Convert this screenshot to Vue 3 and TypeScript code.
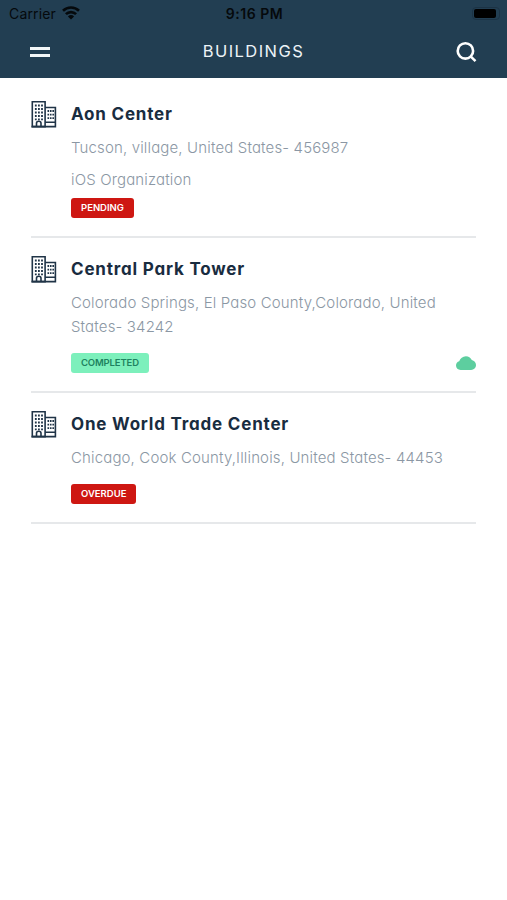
<script setup lang="ts">
type Status = 'pending' | 'completed' | 'overdue'

interface Building {
  id: number
  name: string
  address: string[]
  organization?: string
  status: Status
  synced?: boolean
}

const buildings: Building[] = [
  {
    id: 1,
    name: 'Aon Center',
    address: ['Tucson, village, United States- 456987'],
    organization: 'iOS Organization',
    status: 'pending',
  },
  {
    id: 2,
    name: 'Central Park Tower',
    address: ['Colorado Springs, El Paso County,Colorado, United', 'States- 34242'],
    status: 'completed',
    synced: true,
  },
  {
    id: 3,
    name: 'One World Trade Center',
    address: ['Chicago, Cook County,Illinois, United States- 44453'],
    status: 'overdue',
  },
]
</script>

<template>
  <div class="screen">
    <header class="header">
      <div class="status-bar">
        <div class="carrier">
          <span>Carrier</span>
          <svg class="wifi" viewBox="0 0 18 14" width="18" height="14">
            <g fill="none" stroke="#05090c" stroke-width="2.6">
              <path d="M1 4.8a11.4 11.4 0 0 1 16 0" />
              <path d="M3.9 8.200a7.200 7.200 0 0 1 10.200 0" />
            </g>
            <path d="M9 13.600 5.900 10.400a4.500 4.500 0 0 1 6.200 0z" fill="#05090c" />
          </svg>
        </div>
        <span class="time">9:16 PM</span>
        <div class="battery"><i></i></div>
      </div>
      <nav class="nav">
        <button class="menu" aria-label="Menu"><i></i><i></i></button>
        <h1>BUILDINGS</h1>
        <button class="search" aria-label="Search">
          <svg viewBox="0 0 22 22" width="22" height="22" fill="none" stroke="#fff" stroke-width="2.6">
            <circle cx="10.4" cy="9.9" r="7.7" />
            <path d="m15.6 15.400 4.900 4.700" />
          </svg>
        </button>
      </nav>
    </header>

    <main class="list">
      <article v-for="b in buildings" :key="b.id" class="item">
        <svg class="icon" viewBox="0 0 26 28" width="26" height="28">
          <g fill="none" stroke="#203447" stroke-width="1.6">
            <path d="M1.300 26.600V1.800h12.800v24.800z" />
            <path d="M14.100 7.500h10.300v19.100H14.100M14.100 22.300h10.300M.5 26.600h24.700" />
            <path d="M5.500 26.500v-3.300c0-2.600 4.500-2.600 4.500 0v3.300" />
          </g>
          <path d="M3.900 5.500h8M3.900 9h8M3.900 12.500h8M3.900 16h8M3.900 19.300h8" stroke="#203447" stroke-width="1.800" stroke-dasharray="1.800 1.300" />
          <path d="M16.500 11h6.500M16.500 14.600h6.500M16.500 18.200h6.500" stroke="#203447" stroke-width="1.800" stroke-dasharray="1.600 .85" />
        </svg>
        <div class="body">
          <h2>{{ b.name }}</h2>
          <p class="address">
            <span v-for="line in b.address" :key="line">{{ line }}</span>
          </p>
          <p v-if="b.organization" class="organization">{{ b.organization }}</p>
          <div class="foot" :class="{ tight: b.organization }">
            <span class="badge" :class="b.status">{{ b.status.toUpperCase() }}</span>
            <svg v-if="b.synced" class="cloud" viewBox="0 0 20 14" width="20" height="14">
              <path
                d="M4.600 13.900C2 13.900 0 12 0 9.500 0 7.400 1.300 5.700 3.200 5.200 4.300 2.400 6.700.2 9.900.2c2.700 0 4.700 1.400 5.900 3.700 2.400.5 4.200 2.400 4.200 5.100 0 2.800-2.100 4.900-4.900 4.900z"
                fill="#5dce9f"
              />
            </svg>
          </div>
        </div>
      </article>
    </main>
  </div>
</template>

<style>
body {
  margin: 0;
  background: #fff;
}
</style>

<style scoped>
.screen {
  min-height: 900px;
  background: #fff;
  font-family: Inter, 'Open Sans', sans-serif;
  font-feature-settings: 'cv11' 1;
}
.header {
  height: 78px;
  background: #223e52;
}
.status-bar {
  display: grid;
  grid-template-columns: 1fr auto 1fr;
  align-items: center;
  height: 27px;
  padding: 0 7px 0 9px;
  color: #05090c;
  font-size: 14px;
  font-feature-settings: normal;
}
.carrier {
  display: flex;
  align-items: center;
  gap: 6px;
  letter-spacing: 0.15px;
}
.wifi {
  margin-top: -2px;
}
.time {
  font-weight: 600;
  letter-spacing: 0.5px;
}
.battery {
  justify-self: end;
  box-sizing: border-box;
  width: 28px;
  height: 13px;
  padding: 1px;
  border: 1px solid #1c3345;
  border-radius: 4px;
}
.battery i {
  display: block;
  width: 22px;
  height: 9px;
  border-radius: 2px;
  background: #000;
}
.nav {
  display: grid;
  grid-template-columns: 1fr auto 1fr;
  align-items: center;
  height: 49px;
  padding: 0 30px;
}
button {
  padding: 0;
  border: 0;
  background: none;
}
.menu {
  display: flex;
  flex-direction: column;
  gap: 4px;
  width: 20px;
}
.menu i {
  height: 3px;
  background: #f2f6f8;
}
.search {
  justify-self: end;
  height: 22px;
}
.search svg {
  display: block;
}
h1 {
  margin: -2px 0 0;
  color: #edf3f7;
  font-size: 16.5px;
  font-weight: 400;
  letter-spacing: 1.45px;
}
.list {
  padding: 5px 31px 0;
}
.item {
  display: flex;
  gap: 14px;
  padding: 17px 0 18px;
  border-bottom: 2px solid #e6e8ea;
}
.icon {
  flex: none;
}
.body {
  flex: 1;
}
h2 {
  margin: 0;
  color: #192c3f;
  font-size: 17px;
  font-weight: 700;
  line-height: 29px;
  letter-spacing: 0.8px;
}
p {
  margin: 0;
  color: #8b97a4;
  font-size: 15px;
  font-weight: 300;
  line-height: 24px;
  letter-spacing: 0.145px;
  white-space: nowrap;
}
.address {
  margin-top: 7px;
}
.address span {
  display: block;
}
.organization {
  margin-top: 8px;
}
.foot {
  display: flex;
  align-items: center;
  justify-content: space-between;
  margin-top: 14px;
}
.foot.tight {
  margin-top: 6px;
}
.badge {
  padding: 0 10px;
  border-radius: 3px;
  background: #ce1712;
  color: #fff;
  font-size: 9.5px;
  font-weight: 600;
  line-height: 20px;
}
.badge.completed {
  background: #7df0bc;
  color: #208260;
  letter-spacing: -0.15px;
}
.cloud {
  display: block;
}
</style>
